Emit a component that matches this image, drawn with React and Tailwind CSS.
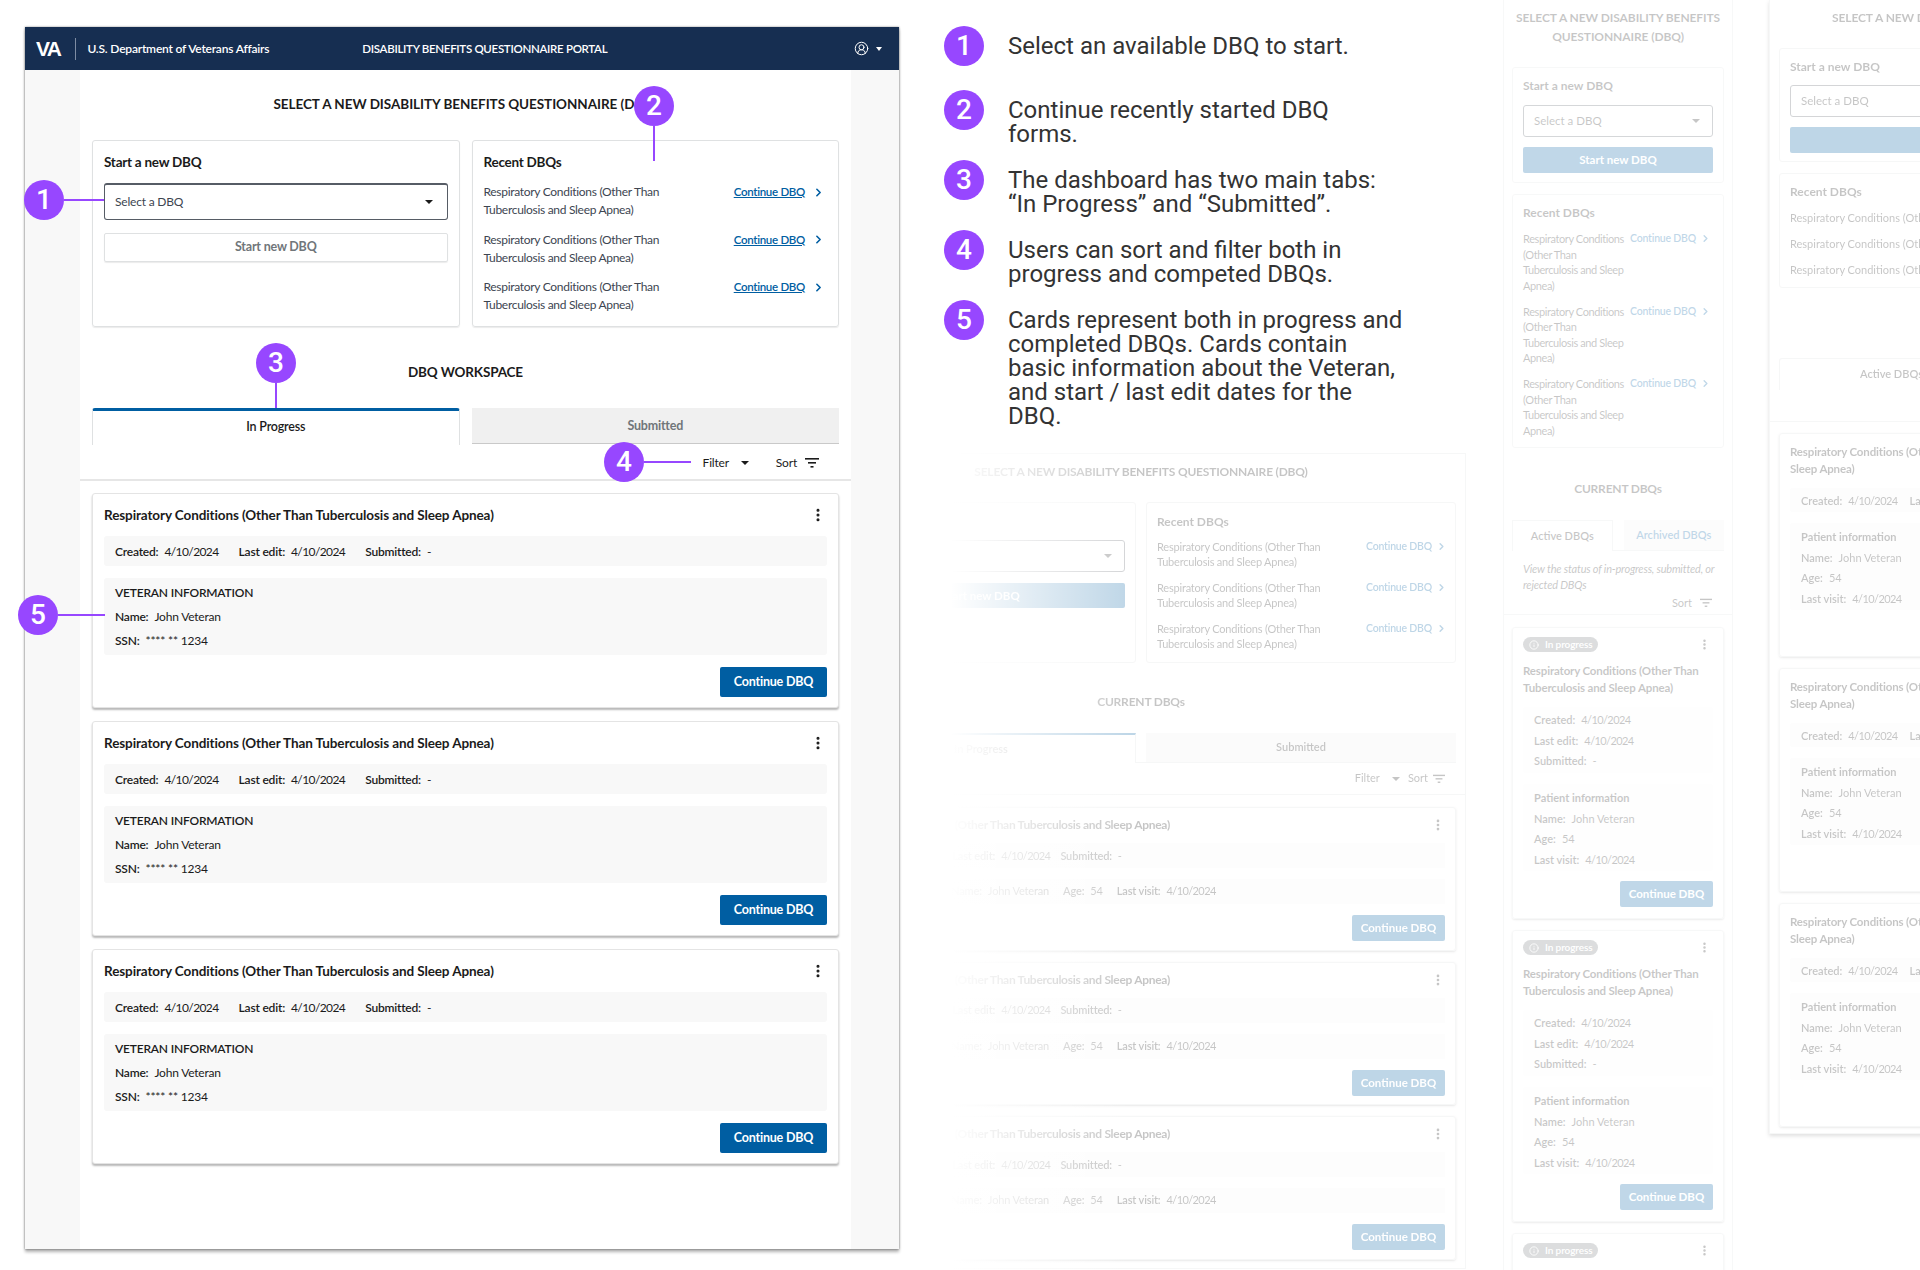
import React from 'react';
import { ChevronRight, CircleUserRound, EllipsisVertical, Info } from 'lucide-react';

const title = 'Respiratory Conditions (Other Than Tuberculosis and Sleep Apnea)';

const Callout = ({ n, className }) => (
  <div className={`absolute z-20 flex h-10 w-10 items-center justify-center rounded-full bg-[#9747ff] font-['Roboto',sans-serif] text-[28px] font-medium text-white ${className}`}>
    {n}
  </div>
);

const Caret = ({ className = '' }) => (
  <span className={`inline-block h-0 w-0 border-x-[4px] border-t-[4px] border-x-transparent border-t-[#1b1b1b] ${className}`} />
);

const SortIcon = ({ width = 14 }) => (
  <svg width={width} height="12" viewBox="0 0 14 12" fill="#1b1b1b">
    <rect x="0" y="1" width="14" height="1.6" />
    <rect x="3" y="5" width="8" height="1.6" />
    <rect x="5.5" y="9" width="3" height="1.6" />
  </svg>
);

const Field = ({ label, value }) => (
  <span className="flex gap-[6px]">
    <span className="font-semibold">{label}</span>
    <span>{value}</span>
  </span>
);

// dates are set tighter, Lato's digits run wider than the reference's
const DateField = ({ label, value }) => (
  <span className="flex gap-[6px]">
    <span className="font-semibold">{label}</span>
    <span className="tracking-[-0.6px]">{value}</span>
  </span>
);

const MainCard = () => (
  <div className="h-[215px] rounded-[3px] border border-[#e4e4e4] bg-white px-[11px] shadow-[0_2px_2px_rgba(0,0,0,0.28)]">
    <div className="flex h-[42px] items-center justify-between">
      <h3 className="text-[13.5px] font-bold tracking-[-0.1px] text-[#1b1b1b]">{title}</h3>
      <EllipsisVertical size={16} strokeWidth={2.6} className="mr-[1px] -mt-px text-[#1b1b1b]" />
    </div>
    <div className="flex h-[30px] items-center gap-5 rounded-[3px] bg-[#f8f8f8] px-[11px] pt-[2px] text-[12px] tracking-[-0.2px] text-[#1b1b1b]">
      <DateField label="Created:" value="4/10/2024" />
      <DateField label="Last edit:" value="4/10/2024" />
      <DateField label="Submitted:" value="-" />
    </div>
    <div className="mt-3 flex h-[77px] flex-col gap-[6px] rounded-[3px] bg-[#f8f8f8] px-[11px] pt-[6px] text-[12px] leading-[18px] tracking-[-0.2px] text-[#1b1b1b]">
      <div className="font-semibold">VETERAN INFORMATION</div>
      <Field label="Name:" value="John Veteran" />
      <Field label="SSN:" value="**** ** 1234" />
    </div>
    <div className="mt-3 flex justify-end">
      <button className="h-[30px] w-[107px] rounded-[2px] bg-[#005ea2] pt-px text-[12.5px] font-bold tracking-[-0.2px] text-white">Continue DBQ</button>
    </div>
  </div>
);

const RecentRow = () => (
  <div className="flex h-[47.5px] items-start justify-between pr-[2px] text-[12px] leading-[18px] tracking-[-0.3px] text-[#3d4551]">
    <p className="w-[190px]">Respiratory Conditions (Other Than Tuberculosis and Sleep Apnea)</p>
    <span className="flex items-center gap-[7px]">
      <a className="text-[11.5px] font-semibold text-[#005ea2] underline">Continue DBQ</a>
      <ChevronRight size={13} strokeWidth={3} className="text-[#005ea2]" />
    </span>
  </div>
);

const MainWindow = () => (
  <div className="absolute left-[25px] top-[27px] flex h-[1222px] w-[874px] flex-col bg-[#f8f8f8] shadow-[0_0_2px_rgba(0,0,0,0.45),0_3px_3px_rgba(0,0,0,0.3)]">
    <header className="flex h-[43px] shrink-0 items-center bg-[#162e51] text-white">
      <span className="ml-[11px] font-['Liberation_Sans',sans-serif] text-[21px] font-bold tracking-[-1.6px]">VA</span>
      <span className="ml-[15px] h-[22px] w-px bg-[#7e8ca3]" />
      <span className="ml-[11px] text-[12px] font-semibold tracking-[-0.2px]">U.S. Department of Veterans Affairs</span>
      <span className="ml-[93px] text-[11.5px] font-semibold tracking-[-0.3px]">DISABILITY BENEFITS QUESTIONNAIRE PORTAL</span>
      <span className="ml-auto mr-[17px] flex items-center gap-[7px]">
        <CircleUserRound size={15} strokeWidth={1.6} />
        <span className="h-0 w-0 border-x-[3.5px] border-t-[4px] border-x-transparent border-t-white" />
      </span>
    </header>
    <main className="ml-[55px] w-[771px] flex-1 bg-white">
      <h1 className="mt-[24px] h-[20px] text-center text-[13.5px] font-bold leading-[20px] tracking-[-0.05px] text-[#1b1b1b]">
        SELECT A NEW DISABILITY BENEFITS QUESTIONNAIRE (DBQ)
      </h1>
      <div className="mx-[12px] mt-[26px] grid h-[186px] grid-cols-2 gap-3">
        <section className="rounded-[3px] border border-[#dfe1e2] px-[11px] pt-[11px] shadow-[0_1px_1px_rgba(0,0,0,0.08)]">
          <h2 className="text-[13.5px] font-bold leading-[20px] tracking-[-0.25px] text-[#1b1b1b]">Start a new DBQ</h2>
          <div className="mt-[11px] flex h-[37px] items-center justify-between rounded-[3px] border border-t-2 border-[#565c65] px-[10px] text-[12px] tracking-[-0.2px] text-[#3d4551]">
            Select a DBQ
            <Caret className="mr-[4px]" />
          </div>
          <button className="mt-[13px] h-[29px] w-full rounded-[2px] border border-[#dfe1e2] text-[12.5px] font-bold tracking-[-0.2px] text-[#71767a] shadow-[0_1px_1px_rgba(0,0,0,0.08)]">
            Start new DBQ
          </button>
        </section>
        <section className="rounded-[3px] border border-[#dfe1e2] px-[11px] pt-[11px] shadow-[0_1px_1px_rgba(0,0,0,0.08)]">
          <h2 className="text-[13.5px] font-bold leading-[20px] tracking-[-0.25px] text-[#1b1b1b]">Recent DBQs</h2>
          <div className="mt-[11px]">
            <RecentRow />
            <RecentRow />
            <RecentRow />
          </div>
        </section>
      </div>
      <h2 className="mt-[36px] h-[20px] text-center text-[13.5px] font-bold leading-[20px] tracking-[-0.15px] text-[#1b1b1b]">DBQ WORKSPACE</h2>
      <div className="mx-[12px] mt-[26px] grid h-[36px] grid-cols-2 gap-3 text-[12.5px] tracking-[-0.2px]">
        <div className="-mb-px flex items-center justify-center rounded-t-[3px] border-x border-t-[3px] border-x-[#dfe1e2] border-t-[#005ea2] bg-white pb-[2px] font-semibold text-[#1b1b1b]">In Progress</div>
        <div className="flex items-center justify-center border-b border-[#c9c9c9] bg-[#f0f0f0] pt-[2px] font-bold text-[#71767a]">Submitted</div>
      </div>
      <div className="flex h-[37px] items-center justify-end border-b-2 border-[#e6e6e6] pr-[32px] pt-[2px] text-[12px] tracking-[-0.2px] text-[#1b1b1b]">
        <span>Filter</span>
        <Caret className="ml-[12px]" />
        <span className="ml-[27px]">Sort</span>
        <span className="ml-[8px]"><SortIcon /></span>
      </div>
      <div className="mx-[12px] mt-[12px] flex flex-col gap-[13px]">
        <MainCard />
        <MainCard />
        <MainCard />
      </div>
    </main>
  </div>
);

const notes = [
  { n: 1, h: 'h-[64px]', text: ['Select an available DBQ to start.'] },
  { n: 2, h: 'h-[70px]', text: ['Continue recently started DBQ', 'forms.'] },
  { n: 3, h: 'h-[70px]', text: ['The dashboard has two main tabs:', '“In Progress” and “Submitted”.'] },
  { n: 4, h: 'h-[70px]', text: ['Users can sort and filter both in', 'progress and competed DBQs.'] },
  { n: 5, h: 'h-[130px]', text: ['Cards represent both in progress and', 'completed DBQs. Cards contain', 'basic information about the Veteran,', 'and start / last edit dates for the', 'DBQ.'] },
];

const Notes = () => (
  <div className="absolute left-[944px] top-[26px] w-[480px] font-['Roboto',sans-serif] text-[24px] leading-[24px] text-[#333]">
    {notes.map((note) => (
      <div key={note.n} className={`flex gap-6 ${note.h}`}>
        <div className="flex h-10 w-10 shrink-0 items-center justify-center rounded-full bg-[#9747ff] text-[28px] font-medium text-white">{note.n}</div>
        <div className="pt-[8px]">
          {note.text.map((line) => <div key={line}>{line}</div>)}
        </div>
      </div>
    ))}
  </div>
);

const SmallSelect = () => (
  <div className="flex h-[32px] items-center justify-between rounded-[3px] border border-[#565c65] px-[10px] text-[11.5px]">
    Select a DBQ
    <Caret className="mr-[2px]" />
  </div>
);

const SmallLink = () => (
  <span className="flex shrink-0 items-center gap-[4px] self-start text-[10.5px] font-semibold tracking-[-0.2px] text-[#005ea2]">
    Continue DBQ
    <ChevronRight size={11} strokeWidth={3} />
  </span>
);

const WideCard = () => (
  <div className="h-[143.5px] rounded-[3px] border border-[#dfe1e2] px-[10px] shadow-[0_1px_2px_rgba(0,0,0,0.35)]">
    <div className="flex h-[34px] items-center justify-between">
      <h3 className="text-[12px] font-bold tracking-[-0.3px]">{title}</h3>
      <EllipsisVertical size={14} strokeWidth={2.6} />
    </div>
    <div className="mt-px flex h-[25px] items-center gap-[10px] bg-[#f8f8f8] px-[10px] pt-px text-[11px] tracking-[-0.15px]">
      <DateField label="Created:" value="4/10/2024" />
      <DateField label="Last edit:" value="4/10/2024" />
      <DateField label="Submitted:" value="-" />
    </div>
    <div className="mt-[11px] flex h-[25px] items-center bg-[#f8f8f8] px-[10px] text-[11px] tracking-[-0.15px]">
      <span className="w-[104px] font-bold">Patient information</span>
      <span className="flex gap-[14px]">
        <Field label="Name:" value="John Veteran" />
        <Field label="Age:" value="54" />
        <DateField label="Last visit:" value="4/10/2024" />
      </span>
    </div>
    <div className="mt-[11px] flex justify-end">
      <button className="h-[26px] w-[93px] rounded-[2px] bg-[#005ea2] text-[11.5px] font-bold text-white">Continue DBQ</button>
    </div>
  </div>
);

const WideWindow = () => (
  <div className="absolute left-[816px] top-[453px] h-[816px] w-[650px]">
    <div className="h-full w-full border border-[#dfe1e2] bg-white text-[#1b1b1b] opacity-25 blur-[0.5px]">
      <h1 className="mt-[8px] text-center text-[12px] font-bold leading-[20px] tracking-[-0.2px]">SELECT A NEW DISABILITY BENEFITS QUESTIONNAIRE (DBQ)</h1>
      <div className="mx-[9px] mt-[20px] grid h-[159px] grid-cols-2 gap-[10px]">
        <section className="rounded-[3px] border border-[#dfe1e2] px-[10px] pt-[10px]">
          <h2 className="text-[12px] font-bold leading-[18px]">Start a new DBQ</h2>
          <div className="mt-[9px]"><SmallSelect /></div>
          <button className="mt-[11px] h-[25px] w-full rounded-[2px] bg-[#005ea2] text-[11.5px] font-bold text-white">Start new DBQ</button>
        </section>
        <section className="rounded-[3px] border border-[#dfe1e2] px-[10px] pt-[10px] text-[11px] leading-[15px]">
          <h2 className="mb-[8px] text-[12px] font-bold leading-[18px]">Recent DBQs</h2>
          {[0, 1, 2].map((i) => (
            <div key={i} className="-mr-[2px] flex h-[41px] justify-between">
              <p className="w-[185px] tracking-[-0.2px]">{title}</p>
              <SmallLink />
            </div>
          ))}
        </section>
      </div>
      <h2 className="mt-[31px] text-center text-[12px] font-bold leading-[20px] tracking-[-0.2px]">CURRENT DBQs</h2>
      <div className="mx-[9px] mt-[21px] grid h-[30px] grid-cols-2 gap-[10px] border-b border-[#dfe1e2] text-[11px] font-semibold">
        <div className="-mb-px flex items-center justify-center border-x border-t-2 border-x-[#dfe1e2] border-t-[#005ea2] bg-white">In Progress</div>
        <div className="flex items-center justify-center bg-[#f0f0f0]">Submitted</div>
      </div>
      <div className="flex h-[32px] items-center justify-end border-b border-[#dfe1e2] pr-[20px] text-[11px]">
        <span>Filter</span>
        <Caret className="ml-[12px]" />
        <span className="ml-[8px]">Sort</span>
        <span className="ml-[5px]"><SortIcon width={12} /></span>
      </div>
      <div className="mx-[9px] mt-[12px] flex flex-col gap-[11px]">
        <WideCard />
        <WideCard />
        <WideCard />
      </div>
    </div>
    <div className="absolute inset-y-0 left-0 w-[314px] bg-gradient-to-r from-white from-[43%] to-transparent" />
  </div>
);

const StackedDates = () => (
  <div className="mt-[11px] flex flex-col gap-[5.5px] rounded-[3px] bg-[#f8f8f8] px-[11px] py-[5px] text-[11px] leading-[15px]">
    <DateField label="Created:" value="4/10/2024" />
    <DateField label="Last edit:" value="4/10/2024" />
    <DateField label="Submitted:" value="-" />
  </div>
);

const InlineDates = () => (
  <div className="mt-[11px] flex h-[24px] items-center gap-3 rounded-[3px] bg-[#f8f8f8] px-[11px] text-[11px] leading-[15px]">
    <DateField label="Created:" value="4/10/2024" />
    <DateField label="Last edit:" value="4/10/2024" />
    <DateField label="Submitted:" value="-" />
  </div>
);

const PatientInfo = () => (
  <div className="mt-[11px] flex h-[87px] flex-col gap-[5.5px] rounded-[3px] bg-[#f8f8f8] px-[11px] pt-[6px] text-[11px] leading-[15px]">
    <div className="font-bold">Patient information</div>
    <Field label="Name:" value="John Veteran" />
    <Field label="Age:" value="54" />
    <DateField label="Last visit:" value="4/10/2024" />
  </div>
);

const NarrowCard = () => (
  <div className="h-[292px] shrink-0 rounded-[3px] border border-[#dfe1e2] px-[10px] pt-[9px] shadow-[0_1px_2px_rgba(0,0,0,0.3)]">
    <div className="flex items-center justify-between">
      <span className="flex h-[15px] w-[75px] items-center gap-[6px] rounded-full bg-[#71767a] pl-[6px] text-[10px] font-semibold tracking-[-0.1px] text-white">
        <Info size={10} />
        In progress
      </span>
      <EllipsisVertical size={13} strokeWidth={2.6} className="mr-[2px]" />
    </div>
    <h3 className="mt-[10px] whitespace-nowrap text-[11.5px] font-bold leading-[17px] tracking-[-0.15px]">
      Respiratory Conditions (Other Than<br />Tuberculosis and Sleep Apnea)
    </h3>
    <StackedDates />
    <PatientInfo />
    <div className="mt-[10px] flex justify-end">
      <button className="h-[26px] w-[93px] rounded-[2px] bg-[#005ea2] text-[11.5px] font-bold text-white">Continue DBQ</button>
    </div>
  </div>
);

const NarrowWindow = () => (
  <div className="absolute left-[1503px] top-0 h-[1270px] w-[230px] overflow-hidden border-x border-[#dfe1e2] bg-white text-[#1b1b1b] opacity-25 blur-[0.5px]">
    <h1 className="mt-[8px] text-center text-[12px] font-bold leading-[19px] tracking-[-0.1px]">
      SELECT A NEW DISABILITY BENEFITS<br />QUESTIONNAIRE (DBQ)
    </h1>
    <section className="mx-[8px] mt-[21px] h-[116px] rounded-[3px] border border-[#dfe1e2] px-[10px] pt-[9px]">
      <h2 className="text-[12px] font-bold leading-[18px]">Start a new DBQ</h2>
      <div className="mt-[10px]"><SmallSelect /></div>
      <button className="mt-[10px] h-[26px] w-full rounded-[2px] bg-[#005ea2] text-[11.5px] font-bold text-white">Start new DBQ</button>
    </section>
    <section className="mx-[8px] mt-[11px] h-[254px] rounded-[3px] border border-[#dfe1e2] px-[10px] pt-[9px] text-[11px] leading-[15.5px]">
      <h2 className="mb-[9px] text-[12px] font-bold leading-[18px]">Recent DBQs</h2>
      {[0, 1, 2].map((i) => (
        <div key={i} className="flex h-[72.5px] justify-between pr-[2px]">
          <p className="whitespace-nowrap tracking-[-0.4px]">
            Respiratory Conditions<br />(Other Than<br />Tuberculosis and Sleep<br />Apnea)
          </p>
          <SmallLink />
        </div>
      ))}
    </section>
    <h2 className="mt-[31px] text-center text-[12px] font-bold leading-[20px] tracking-[-0.2px]">CURRENT DBQs</h2>
    <div className="mx-[8px] mt-[21px] grid h-[31px] grid-cols-2 gap-[11px] border-b border-[#dfe1e2] text-[11px] font-semibold">
      <div className="-mb-px flex items-center justify-center border-x border-t border-[#dfe1e2] bg-white">Active DBQs</div>
      <div className="flex items-center justify-center bg-[#f0f0f0] text-[#005ea2]">Archived DBQs</div>
    </div>
    <p className="mx-[19px] mt-[10px] whitespace-nowrap text-[11px] italic leading-[15.5px] tracking-[-0.2px]">
      View the status of in-progress, submitted, or<br />rejected DBQs
    </p>
    <div className="flex h-[23px] items-center justify-end gap-2 border-b border-[#dfe1e2] pr-[20px] text-[11px]">
      Sort
      <SortIcon width={12} />
    </div>
    <div className="mx-[8px] mt-[12px] flex flex-col gap-[11px]">
      <NarrowCard />
      <NarrowCard />
      <NarrowCard />
    </div>
  </div>
);

const TallCard = () => (
  <div className="h-[224px] rounded-[3px] border border-[#dfe1e2] px-[10px] pt-[9px] shadow-[0_1px_2px_rgba(0,0,0,0.3)]">
    <h3 className="whitespace-nowrap text-[11.5px] font-bold leading-[17px] tracking-[-0.15px]">
      Respiratory Conditions (Other Than Tuberculosis and<br />Sleep Apnea)
    </h3>
    <InlineDates />
    <PatientInfo />
  </div>
);

const CutOffWindow = () => (
  <div className="absolute left-[1769px] top-0 h-[1134px] w-[470px] border-x border-b border-[#dfe1e2] bg-white text-[#1b1b1b] opacity-25 shadow-[0_2px_4px_rgba(0,0,0,0.5)] blur-[0.5px]">
    <h1 className="mt-[8px] whitespace-nowrap pl-[62px] text-[12px] font-bold leading-[19px] tracking-[-0.1px]">SELECT A NEW DISABILITY BENEFITS QUESTIONNAIRE (DBQ)</h1>
    <div className="mx-[9px] mt-[21px] w-[450px]">
      <section className="h-[114px] rounded-[3px] border border-[#dfe1e2] px-[10px] pt-[9px]">
        <h2 className="text-[12px] font-bold leading-[18px]">Start a new DBQ</h2>
        <div className="mt-[9px]"><SmallSelect /></div>
        <button className="mt-[10px] h-[26px] w-full rounded-[2px] bg-[#005ea2] text-[11.5px] font-bold text-white">Start new DBQ</button>
      </section>
      <section className="mt-[11px] h-[115px] rounded-[3px] border border-[#dfe1e2] px-[10px] pt-[9px] text-[11px] leading-[15px]">
        <h2 className="mb-[9px] text-[12px] font-bold leading-[18px]">Recent DBQs</h2>
        <p className="h-[26px] whitespace-nowrap">{title}</p>
        <p className="h-[26px] whitespace-nowrap">{title}</p>
        <p className="whitespace-nowrap">{title}</p>
      </section>
    </div>
    <div className="mx-[9px] mt-[70px] grid h-[32px] w-[450px] grid-cols-2 text-[11px] font-semibold">
      <div className="flex items-center justify-center rounded-t-[3px] border-x border-t border-[#dfe1e2]">Active DBQs</div>
    </div>
    <div className="mt-[31px] border-t border-[#dfe1e2]" />
    <div className="mx-[9px] mt-[11px] flex w-[450px] flex-col gap-[11px]">
      <TallCard />
      <TallCard />
      <TallCard />
    </div>
  </div>
);

const App = () => (
  <div className="relative h-[1270px] w-[1920px] overflow-hidden bg-white font-['Lato',sans-serif]">
    <WideWindow />
    <NarrowWindow />
    <CutOffWindow />
    <MainWindow />
    <Notes />
    <Callout n={1} className="left-[24px] top-[180px]" />
    <div className="absolute left-[64px] top-[199px] z-10 h-[2px] w-[40px] bg-[#9747ff]" />
    <Callout n={2} className="left-[634px] top-[86px]" />
    <div className="absolute left-[653px] top-[126px] z-10 h-[35px] w-[2px] bg-[#9747ff]" />
    <Callout n={3} className="left-[256px] top-[343px]" />
    <div className="absolute left-[275px] top-[383px] z-10 h-[25px] w-[2px] bg-[#9747ff]" />
    <Callout n={4} className="left-[604px] top-[442px]" />
    <div className="absolute left-[644px] top-[461px] z-10 h-[2px] w-[47px] bg-[#9747ff]" />
    <Callout n={5} className="left-[18px] top-[595px]" />
    <div className="absolute left-[58px] top-[614px] z-10 h-[2px] w-[47px] bg-[#9747ff]" />
  </div>
);

export default App;
